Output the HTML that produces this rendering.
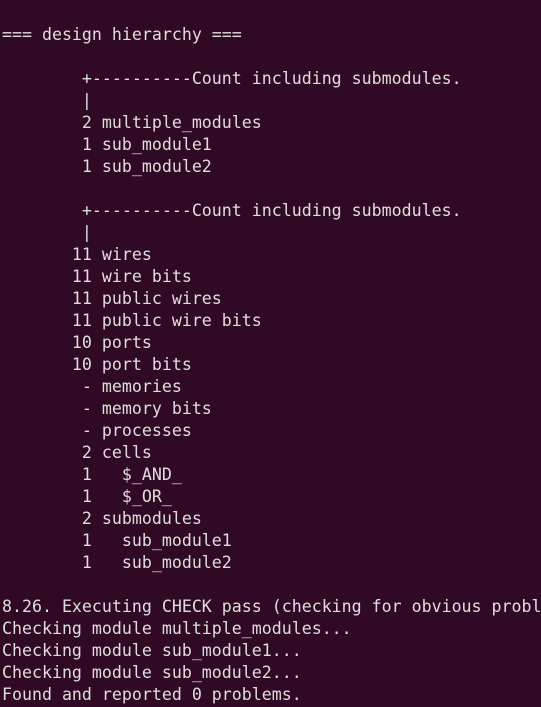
<!DOCTYPE html>
<html><head><style>
html,body{margin:0;padding:0;background:#300a24;width:541px;height:707px;overflow:hidden}
pre{margin:0;padding:24px 0 0 2px;font-family:"DejaVu Sans Mono","Liberation Mono",monospace;font-size:16.6px;line-height:22px;color:#e0dcdc;white-space:pre}
</style></head><body><pre>=== design hierarchy ===

        +----------Count including submodules.
        |
        2 multiple_modules
        1 sub_module1
        1 sub_module2

        +----------Count including submodules.
        |
       11 wires
       11 wire bits
       11 public wires
       11 public wire bits
       10 ports
       10 port bits
        - memories
        - memory bits
        - processes
        2 cells
        1   $_AND_
        1   $_OR_
        2 submodules
        1   sub_module1
        1   sub_module2

8.26. Executing CHECK pass (checking for obvious probl
Checking module multiple_modules...
Checking module sub_module1...
Checking module sub_module2...
Found and reported 0 problems.</pre></body></html>
